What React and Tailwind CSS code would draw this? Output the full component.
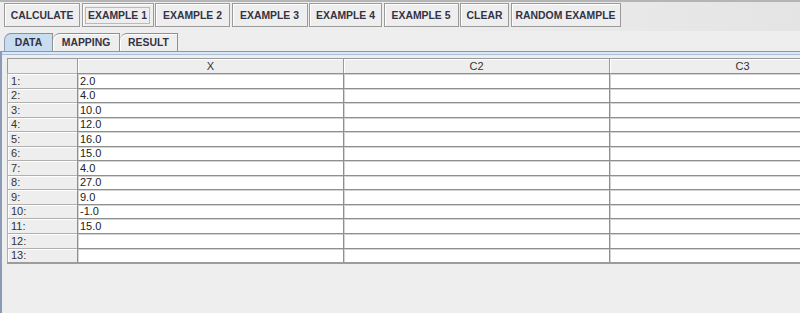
import React from 'react';

const buttons = [
  { label: 'CALCULATE', w: 'w-[76px]' },
  { label: 'EXAMPLE 1', w: 'w-[72px]', focus: true },
  { label: 'EXAMPLE 2', w: 'w-[75px]' },
  { label: 'EXAMPLE 3', w: 'w-[76px]' },
  { label: 'EXAMPLE 4', w: 'w-[73px]' },
  { label: 'EXAMPLE 5', w: 'w-[75px]' },
  { label: 'CLEAR', w: 'w-[49px]' },
  { label: 'RANDOM EXAMPLE', w: 'w-[110px]' },
];

const tabs = [
  { label: 'DATA', w: 'w-[49px]', active: true },
  { label: 'MAPPING', w: 'w-[67px]' },
  { label: 'RESULT', w: 'w-[58px]' },
];

const values = ['2.0', '4.0', '10.0', '12.0', '16.0', '15.0', '4.0', '27.0', '9.0', '-1.0', '15.0', '', ''];

function ToolButton({ label, w, focus }) {
  return (
    <div
      className={`${w} h-[24px] shrink-0 flex items-center justify-center border border-[#9a9a9a] bg-[#eeeeee] shadow-[inset_1px_1px_0_#ffffff]`}
    >
      <span
        className={`px-[2px] whitespace-nowrap leading-[15px] font-bold text-[10.4px] text-[#333344] ${
          focus ? 'border border-[#a9bdd6]' : 'border border-transparent'
        }`}
      >
        {label}
      </span>
    </div>
  );
}

function Tab({ label, w, active }) {
  return (
    <div
      className={`${w} h-[18px] shrink-0 flex items-center justify-center whitespace-nowrap border-t border-r border-[#8f8f8f] rounded-tl-[7px] font-bold text-[10.4px] text-[#333344] ${
        active ? 'bg-[#c9ddf1] border-l border-l-[#8f9fb8]' : 'bg-[#eeeeee] shadow-[inset_1px_1px_0_#ffffff]'
      }`}
    >
      {label}
    </div>
  );
}

const cell = 'h-[14.55px] bg-white border-t border-l border-[#8f8f8f] shadow-[inset_1px_1px_0_#d4d4d4]';

export default function App() {
  return (
    <div
      className="w-[800px] h-[313px] overflow-hidden bg-[#eeeeee] flex flex-col"
      style={{ fontFamily: '"Liberation Sans", Arial, sans-serif' }}
    >
      <div className="h-[31px] shrink-0 border-t-[2px] border-[#b4b4b4] flex items-start pt-[1px] pl-[4px] gap-[1.5px] bg-gradient-to-r from-[#eeeeee] via-[#eeeeee] to-[#e4e4e4]">
        {buttons.map((b) => (
          <ToolButton key={b.label} {...b} />
        ))}
      </div>

      <div className="flex pl-[4px] pt-[2px] h-[20px] shrink-0 items-end">
        {tabs.map((t) => (
          <Tab key={t.label} {...t} />
        ))}
      </div>

      <div className="flex-1 flex flex-col border-t border-[#7a9acc] border-l-[2px] border-l-[#8c9bb5]">
        <div className="h-[3px] bg-[#dde8f5] border-b border-[#a9bcd8] shrink-0" />
        <div className="pl-[5px] pt-[3px]">
          <div className="grid grid-cols-[70px_266px_266px_266px] text-[11px] text-[#222222]">
            <div className="h-[15px] bg-[#eeeeee] border-t border-l border-[#9a9a9a]" />
            {['X', 'C2', 'C3'].map((c) => (
              <div
                key={c}
                className="h-[15px] bg-[#eeeeee] border-t border-l border-[#9a9a9a] flex items-center justify-center leading-none text-[#333333] shadow-[inset_1px_1px_0_#ffffff]"
              >
                {c}
              </div>
            ))}
            {values.map((v, i) => (
              <React.Fragment key={i}>
                <div className="h-[14.55px] bg-[#eeeeee] border-t border-l border-[#b0b0b0] shadow-[inset_1px_1px_0_#ffffff] flex items-end pl-[3px] leading-[13px] text-[#333333]">
                  {i + 1}:
                </div>
                <div className={`${cell} flex items-end pl-[2px] leading-[13px]`}>{v}</div>
                <div className={cell} />
                <div className={cell} />
              </React.Fragment>
            ))}
            <div className="col-span-4 h-0 border-t-2 border-[#9c9c9c]" />
          </div>
        </div>
      </div>
    </div>
  );
}
